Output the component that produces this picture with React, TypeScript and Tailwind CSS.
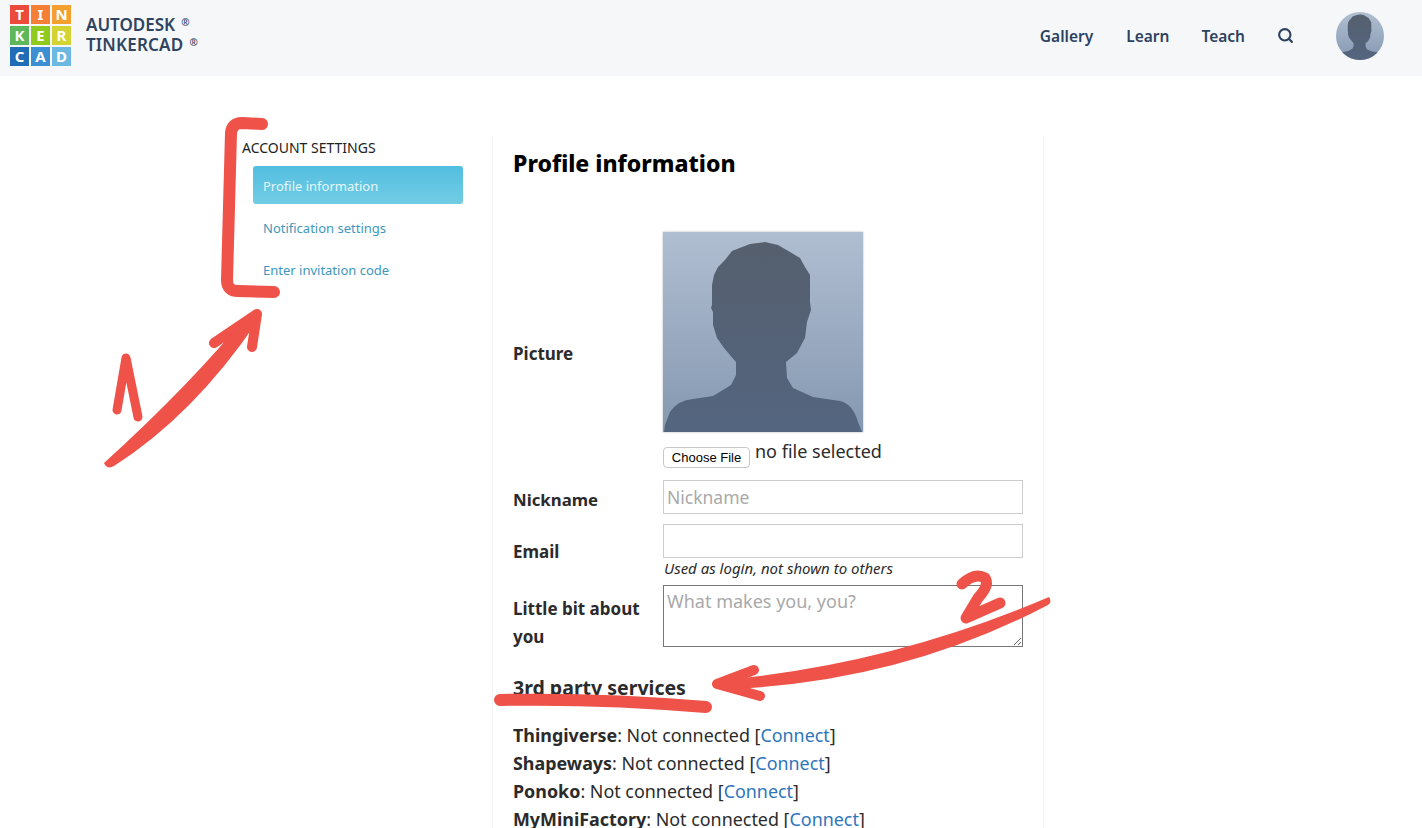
import React from "react";
import { Search } from "lucide-react";

const tiles = [
  { ch: "T", bg: "bg-[#ec4a3b]" },
  { ch: "I", bg: "bg-[#f47f35]" },
  { ch: "N", bg: "bg-[#f4a02e]" },
  { ch: "K", bg: "bg-[#5cb85a]" },
  { ch: "E", bg: "bg-[#8fcb1c]" },
  { ch: "R", bg: "bg-[#d3d333]" },
  { ch: "C", bg: "bg-[#1f6db7]" },
  { ch: "A", bg: "bg-[#3c8fd2]" },
  { ch: "D", bg: "bg-[#6bb9e0]" },
];

const services = ["Thingiverse", "Shapeways", "Ponoko", "MyMiniFactory"];

const silhouette =
  "M102 10 L87 12 L69 19 L62 28 L55 35 L51 43 L49 53 L49 73 L48 76 L50 80 L50 93 L54 106 L61 116 L73 130 L73 143 L68 153 L50 164 L30 167 Q15 168 7 180 L2 193 L1 200 L199 200 L195 190 Q190 172 177 169 L150 165 L130 156 L124 146 L123 130 L134 121 L142 106 L144 90 L148 78 L147 70 L147 43 L142 35 L137 26 L127 20 L115 13 Z";

function Portrait({ className }: { className: string }) {
  return (
    <svg viewBox="0 0 200 200" className={className}>
      <defs>
        <linearGradient id="portraitBg" x1="0" y1="0" x2="0" y2="1">
          <stop offset="0" stopColor="#b0bed1" />
          <stop offset="1" stopColor="#8598b1" />
        </linearGradient>
        <linearGradient id="portraitFg" x1="0" y1="0" x2="0" y2="1">
          <stop offset="0" stopColor="#555f6e" />
          <stop offset="1" stopColor="#54657f" />
        </linearGradient>
      </defs>
      <rect width="200" height="200" fill="url(#portraitBg)" />
      <path d={silhouette} fill="url(#portraitFg)" />
    </svg>
  );
}

// red marker notes drawn on top of the page
function Annotations() {
  return (
    <svg className="absolute left-0 top-0 pointer-events-none" width="1422" height="828" viewBox="0 0 1422 828">
      <g fill="none" stroke="#ee5249" strokeLinecap="round" strokeLinejoin="round">
        <path d="M262 124 L242 123 Q232 123 231 133 L227 280 Q227 291 238 291 L274 292" strokeWidth="12" />
        <path d="M214 343 L257 314 L252 347" strokeWidth="10" />
        <path d="M117 410 L126 358 L138 417" strokeWidth="9" />
        <path d="M962 584 Q975 572 985 578 Q990 585 978 598 L966 618 L1000 603" strokeWidth="11" />
        <path d="M754 670 L717 684 L760 696" strokeWidth="10" />
        <path d="M500 700 Q600 698 706 707" strokeWidth="12" />
      </g>
      <path d="M104 463 Q107 470 114 466 Q195 414 258 320 L248 314 Q190 385 104 463 Z" fill="#ee5249" />
      <path d="M1049 597 Q1053 603 1046 606 Q900 682 730 689 L722 680 Q890 665 1049 597 Z" fill="#ee5249" />
    </svg>
  );
}

export default function App() {
  return (
    <div className="relative h-[828px] w-[1422px] overflow-hidden bg-white font-['Noto_Sans',sans-serif] text-[#2b2b2b]">
      <header className="flex h-[76px] items-start bg-[#f6f7f9] pl-[10px]">
        <div className="mt-[5px] grid grid-cols-[repeat(3,19px)] grid-rows-[repeat(3,19px)] gap-[2px]">
          {tiles.map((t) => (
            <div key={t.ch} className={`flex items-center justify-center text-[15px] font-bold leading-none text-white ${t.bg}`}>
              {t.ch}
            </div>
          ))}
        </div>
        <div className="ml-[15px] mt-[15px] text-[17px] font-semibold leading-[20px] text-[#2f4460]">
          <div className="flex items-start">AUTODESK<span className="ml-[6px] text-[10px] leading-[14px]">®</span></div>
          <div className="flex items-start tracking-[0.2px]">TINKERCAD<span className="ml-[6px] text-[10px] leading-[14px]">®</span></div>
        </div>
        <nav className="ml-auto mr-[38px] mt-[12px] flex items-center text-[15.5px] font-semibold text-[#2d4260]">
          <a className="pt-[2px]">Gallery</a>
          <a className="ml-[33px] pt-[2px]">Learn</a>
          <a className="ml-[32px] pt-[2px]">Teach</a>
          <Search size={17} strokeWidth={3} className="ml-[32px] mb-[2px]" />
          <div className="ml-[42px] h-12 w-12 overflow-hidden rounded-full">
            <Portrait className="h-12 w-12" />
          </div>
        </nav>
      </header>

      <div className="flex pl-[242px] pt-[60px]">
        <aside className="w-[250px]">
          <h3 className="mt-[4px] text-[14px] leading-[16px] text-[#222]">ACCOUNT SETTINGS</h3>
          <ul className="ml-[11px] mt-[10px] w-[210px] text-[13px] leading-[16px]">
            <li className="flex h-[38px] items-center rounded-[3px] bg-gradient-to-b from-[#52bee0] to-[#72cde4] pl-[10px] pt-[1px] text-[#e6f6fb]">
              Profile information
            </li>
            <li className="mt-[4px] flex h-[38px] items-center pl-[10px] pt-[1px] text-[#3d97bd]">Notification settings</li>
            <li className="mt-[4px] flex h-[38px] items-center pl-[10px] pt-[1px] text-[#3d97bd]">Enter invitation code</li>
          </ul>
        </aside>

        <main className="w-[552px] border-x border-[#f3f3f3] pl-[20px]">
          <h1 className="mt-[9px] text-[23px] font-extrabold leading-[36px] text-black">Profile information</h1>

          <div className="mt-[51px] flex">
            <label className="w-[150px] self-center pt-[8px] text-[17px] font-bold">Picture</label>
            <div>
              <Portrait className="h-[200px] w-[200px] shadow-[0_0_2px_rgba(0,0,0,0.3)]" />
              <div className="mt-[14px] flex h-[22px] items-start">
                <button className="mt-[1px] h-[21px] w-[87px] rounded-[4px] border border-[#c8c8c8] bg-white font-['Liberation_Sans',sans-serif] text-[13px] leading-none text-black">
                  Choose File
                </button>
                <span className="ml-[5px] -mt-[3px] text-[18px] leading-[16px]">no file selected</span>
              </div>
            </div>
          </div>

          <div className="mt-[12px] flex items-center">
            <label className="w-[150px] pt-[6px] text-[16.8px] font-bold">Nickname</label>
            <input
              placeholder="Nickname"
              className="h-[34px] w-[360px] border border-[#ccc] px-[3px] text-[17.5px] placeholder:text-[#a9a9a9]"
            />
          </div>

          <div className="mt-[10px] flex">
            <label className="w-[150px] pt-[16px] text-[17px] font-bold leading-[24px]">Email</label>
            <div>
              <input className="block h-[34px] w-[360px] border border-[#ccc]" />
              <p className="mt-[1px] pl-[1px] text-[15px] italic leading-[18px]">Used as login, not shown to others</p>
            </div>
          </div>

          <div className="mt-[8px] flex">
            <label className="w-[150px] pt-[10px] text-[17px] font-bold leading-[28px]">
              Little bit about
              <br />
              you
            </label>
            <textarea
              placeholder="What makes you, you?"
              className="h-[62px] w-[360px] border border-[#777] px-[3px] py-[3px] text-[18px] leading-[24px] placeholder:text-[#a9a9a9]"
            />
          </div>

          <h2 className="mt-[23px] text-[19.5px] font-bold leading-[28px]">3rd party services</h2>

          <ul className="mt-[19px] text-[17.9px] leading-[28px]">
            {services.map((s) => (
              <li key={s}>
                <b className="font-bold">{s}</b>: Not connected [<a className="text-[#2f75bb]">Connect</a>]
              </li>
            ))}
          </ul>
        </main>
      </div>

      <Annotations />
    </div>
  );
}
